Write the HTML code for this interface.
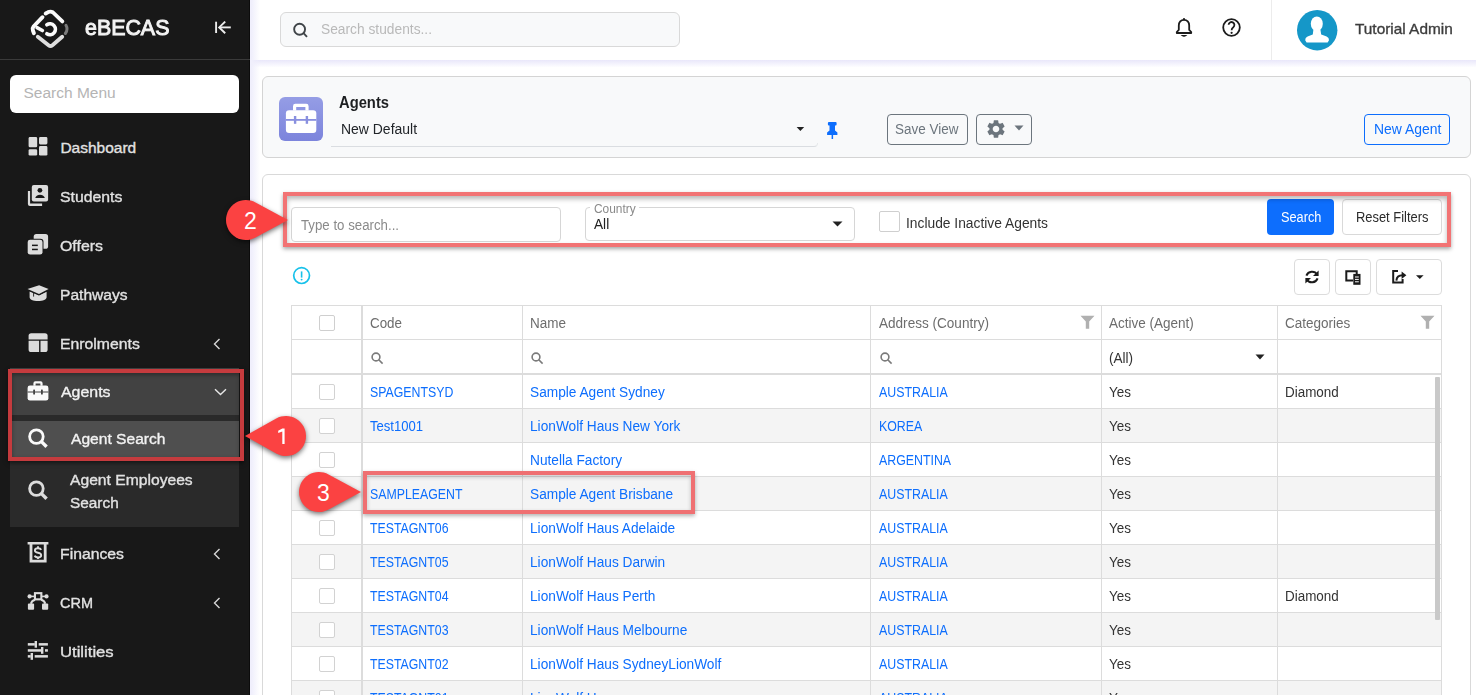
<!DOCTYPE html>
<html><head><meta charset="utf-8"><style>
html,body{margin:0;padding:0;}
body{width:1476px;height:695px;overflow:hidden;position:relative;background:#fff;font-family:"Liberation Sans",sans-serif;}
.t{position:absolute;white-space:nowrap;}
svg{display:block;}
</style></head><body>
<div style="position:absolute;left:250px;top:0px;width:1226px;height:60px;background:#fff;"></div>
<div style="position:absolute;left:250px;top:60px;width:1226px;height:7px;background:linear-gradient(#e9e7fa,#fdfdff);"></div>
<div style="position:absolute;left:250px;top:0px;width:10px;height:695px;background:linear-gradient(90deg,#f0effd,#f0effc 15%,rgba(255,255,255,0));"></div>
<div style="position:absolute;left:0px;top:0px;width:250px;height:695px;background:#181818;"></div>
<div style="position:absolute;left:249px;top:0px;width:1px;height:695px;background:#0c0c0c;"></div>
<div style="position:absolute;left:0px;top:59px;width:250px;height:1px;background:#3a3a3a;"></div>
<svg style="position:absolute;left:28px;top:8px" width="44" height="42" viewBox="0 0 728 695">
<g fill="none" stroke-linecap="round" stroke-width="64">
<path d="M292 92 L335 68 Q372 50 410 70 L568 222" stroke="#fafafa"/>
<path d="M240 152 L92 305 Q68 335 80 368 L98 418" stroke="#fafafa"/>
<path d="M150 325 L238 372" stroke="#fafafa" stroke-width="60"/>
<path d="M162 475 L340 615 Q372 640 404 615 L566 475" stroke="#dedede"/>
<path d="M628 285 Q668 352 618 422" stroke="#7a7a7a" stroke-width="50"/>
<path d="M312 278 A90 90 0 1 1 312 426" stroke="#fafafa" stroke-width="60"/>
</g></svg>
<div class="t" style="left:85.4px;top:17.38px;font-size:22px;line-height:22px;color:#f3f3f3;transform:scaleX(0.9722);transform-origin:0 0;-webkit-text-stroke:1.0px #f3f3f3;">eBECAS</div>
<svg style="position:absolute;left:214px;top:21px" width="18" height="13" viewBox="0 0 18 13"><g stroke="#ececec" stroke-width="1.9" fill="none"><path d="M2.1 0.7V12"/><path d="M16.8 6.4H5.4"/><path d="M11.2 0.6L5.2 6.4L11.2 12.2"/></g></svg>
<div style="position:absolute;left:10px;top:75px;width:229px;height:38px;background:#fff;border-radius:6px;"></div>
<div class="t" style="left:23.5px;top:85.28px;font-size:15.5px;line-height:15.5px;color:#b4b4b4;">Search Menu</div>
<div class="t" style="left:60.4px;top:139.88px;font-size:15.5px;line-height:15.5px;color:#e2e2e2;-webkit-text-stroke:0.35px #e2e2e2;">Dashboard</div>
<div class="t" style="left:60.4px;top:188.88px;font-size:15.5px;line-height:15.5px;color:#e2e2e2;transform:scaleX(1.0199);transform-origin:0 0;-webkit-text-stroke:0.35px #e2e2e2;">Students</div>
<div class="t" style="left:60.4px;top:237.88px;font-size:15.5px;line-height:15.5px;color:#e2e2e2;transform:scaleX(1.0258);transform-origin:0 0;-webkit-text-stroke:0.35px #e2e2e2;">Offers</div>
<div class="t" style="left:60.4px;top:286.88px;font-size:15.5px;line-height:15.5px;color:#e2e2e2;transform:scaleX(1.0060);transform-origin:0 0;-webkit-text-stroke:0.35px #e2e2e2;">Pathways</div>
<div class="t" style="left:60.4px;top:335.88px;font-size:15.5px;line-height:15.5px;color:#e2e2e2;transform:scaleX(1.0180);transform-origin:0 0;-webkit-text-stroke:0.35px #e2e2e2;">Enrolments</div>
<svg style="position:absolute;left:28px;top:137px" width="21" height="20" viewBox="0 0 21 20"><g fill="#dcdcdc"><rect x="0.6" y="0.1" width="8.6" height="10.1" rx="1.3"/><rect x="11" y="0.1" width="8.4" height="7.3" rx="1.3"/><rect x="0.6" y="12.3" width="8.6" height="6.2" rx="1.3"/><rect x="11" y="9.1" width="8.4" height="9.4" rx="1.3"/></g></svg>
<svg style="position:absolute;left:27px;top:184px" width="22" height="23" viewBox="0 0 22 23"><g fill="#dcdcdc"><path d="M0.9 7h2.2v12.5h12v2.4H2.9a2 2 0 0 1-2-2z"/><rect x="4.8" y="1" width="16.3" height="16.6" rx="2"/></g><g fill="#181818"><circle cx="12.9" cy="6.3" r="2.4"/><path d="M8.2 13.9c.9-2.2 2.6-3.2 4.8-3.2s3.9 1 4.9 3.2z"/></g></svg>
<svg style="position:absolute;left:26px;top:232px" width="24" height="24" viewBox="0 0 24 24"><rect x="7.7" y="2.1" width="14.4" height="14.7" rx="2.6" fill="#dcdcdc"/><rect x="0.7" y="6.7" width="16.8" height="16.9" rx="3" fill="#181818"/><rect x="1.7" y="7.7" width="14.8" height="14.9" rx="2.4" fill="#dcdcdc"/><g fill="#181818"><rect x="6" y="12.6" width="5.8" height="1.5"/><rect x="6" y="16.7" width="5.8" height="1.5"/></g></svg>
<svg style="position:absolute;left:26px;top:284px" width="24" height="20" viewBox="0 0 24 20"><g fill="#dcdcdc"><path d="M3.6 7.6L13 11.4L20.6 7.8V13.2C20.6 15.6 17 17 12 17S3.6 15.6 3.6 13.2z"/></g><path d="M2.2 5.9L13 10.8L21.9 6" fill="none" stroke="#181818" stroke-width="1"/><path d="M13.1 1.2L22.6 5L13 9.9L1.5 5z" fill="#dcdcdc"/><path d="M7.6 8.2V12.6" stroke="#181818" stroke-width="0.9"/></svg>
<svg style="position:absolute;left:28px;top:332px" width="21" height="21" viewBox="0 0 21 21"><g fill="#dcdcdc"><path d="M0.6 3.8a2.6 2.6 0 0 1 2.6-2.6h13.8a2.6 2.6 0 0 1 2.6 2.6v3.6H0.6z"/><path d="M0.6 8.8H11.1V20H3.2a2.6 2.6 0 0 1-2.6-2.6z"/><path d="M12.5 8.8H19.6V17.4a2.6 2.6 0 0 1-2.6 2.6H12.5z"/></g></svg>
<svg style="position:absolute;left:212px;top:337.5px" width="10" height="12" viewBox="0 0 10 12"><path d="M7.5 1L2.5 6L7.5 11" stroke="#d6d6d6" stroke-width="1.4" fill="none"/></svg>
<div style="position:absolute;left:10px;top:368px;width:229px;height:47px;background:#424242;"></div>
<div style="position:absolute;left:10px;top:415px;width:229px;height:112px;background:#2a2a2a;"></div>
<div style="position:absolute;left:12px;top:421px;width:227px;height:36px;background:#4f4f4f;"></div>
<div class="t" style="left:60.5px;top:384.28px;font-size:15.5px;line-height:15.5px;color:#f2f2f2;transform:scaleX(1.0258);transform-origin:0 0;-webkit-text-stroke:0.35px #f2f2f2;">Agents</div>
<svg style="position:absolute;left:214px;top:388px" width="13" height="8" viewBox="0 0 13 8"><path d="M1 1.2L6.5 6.6L12 1.2" stroke="#e6e6e6" stroke-width="1.4" fill="none"/></svg>
<svg style="position:absolute;left:27px;top:381px" width="22" height="21" viewBox="0 0 22 21"><g fill="#fafafa"><path d="M6.4 4.8V2.2a2 2 0 0 1 2-2h5.2a2 2 0 0 1 2 2v2.6h-2.2V2.4h-4.8v2.4z"/><rect x="0.6" y="4.5" width="20.8" height="15.1" rx="2.4"/></g><g fill="#424242"><rect x="0.6" y="10.5" width="20.8" height="1"/><rect x="6.2" y="8.4" width="1.8" height="5.1" rx=".6"/><rect x="14" y="8.4" width="1.8" height="5.1" rx=".6"/></g></svg>
<div class="t" style="left:70.6px;top:431.28px;font-size:15.5px;line-height:15.5px;color:#f2f2f2;transform:scaleX(1.0061);transform-origin:0 0;-webkit-text-stroke:0.35px #f2f2f2;">Agent Search</div>
<svg style="position:absolute;left:24px;top:424px" width="26" height="26" viewBox="0 0 26 26"><g fill="none" stroke="#fafafa"><circle cx="12.4" cy="12.6" r="6.8" stroke-width="2.8"/><path d="M17.4 17.6L22.6 22.8" stroke-width="3.4"/></g></svg>
<div class="t" style="left:70.3px;top:472.48px;font-size:15.5px;line-height:15.5px;color:#e2e2e2;transform:scaleX(1.0100);transform-origin:0 0;-webkit-text-stroke:0.35px #e2e2e2;">Agent Employees</div>
<div class="t" style="left:70.3px;top:495.48px;font-size:15.5px;line-height:15.5px;color:#e2e2e2;transform:scaleX(0.9916);transform-origin:0 0;-webkit-text-stroke:0.35px #e2e2e2;">Search</div>
<svg style="position:absolute;left:24px;top:476px" width="26" height="26" viewBox="0 0 26 26"><g fill="none" stroke="#dcdcdc"><circle cx="12.4" cy="12.6" r="6.8" stroke-width="2.8"/><path d="M17.4 17.6L22.6 22.8" stroke-width="3.4"/></g></svg>
<div class="t" style="left:60.4px;top:545.58px;font-size:15.5px;line-height:15.5px;color:#e2e2e2;transform:scaleX(1.0176);transform-origin:0 0;-webkit-text-stroke:0.35px #e2e2e2;">Finances</div>
<div class="t" style="left:60.4px;top:594.58px;font-size:15.5px;line-height:15.5px;color:#e2e2e2;transform:scaleX(0.9349);transform-origin:0 0;-webkit-text-stroke:0.35px #e2e2e2;">CRM</div>
<div class="t" style="left:60.4px;top:643.58px;font-size:15.5px;line-height:15.5px;color:#e2e2e2;transform:scaleX(1.0750);transform-origin:0 0;-webkit-text-stroke:0.35px #e2e2e2;">Utilities</div>
<svg style="position:absolute;left:212px;top:547.5px" width="10" height="12" viewBox="0 0 10 12"><path d="M7.5 1L2.5 6L7.5 11" stroke="#d6d6d6" stroke-width="1.4" fill="none"/></svg>
<svg style="position:absolute;left:212px;top:596.5px" width="10" height="12" viewBox="0 0 10 12"><path d="M7.5 1L2.5 6L7.5 11" stroke="#d6d6d6" stroke-width="1.4" fill="none"/></svg>
<svg style="position:absolute;left:27px;top:540px" width="22" height="24" viewBox="0 0 22 24"><g fill="none" stroke="#dcdcdc"><path d="M0.6 3.25H21.4" stroke-width="2.5"/><path d="M4 3.5V21.2H18.2V3.5" stroke-width="2.8"/></g><g fill="none" stroke="#dcdcdc" stroke-width="1.9"><path d="M14.2 9.8C13.8 8.8 12.6 8.2 11 8.2C9.2 8.2 7.9 9.1 7.9 10.5C7.9 12 9.4 12.5 11 12.8C12.7 13.1 14.2 13.7 14.2 15.2C14.2 16.6 12.8 17.4 11 17.4C9.3 17.4 8.1 16.8 7.7 15.6"/><path d="M11 6.3V8.4"/><path d="M11 17.2V19"/></g></svg>
<svg style="position:absolute;left:26px;top:590px" width="24" height="22" viewBox="0 0 24 22"><g fill="#dcdcdc"><circle cx="3.6" cy="6.4" r="2.1"/><circle cx="20.5" cy="6.4" r="2.1"/><rect x="1.9" y="13.5" width="6.2" height="6.2" rx="1"/><rect x="16" y="13.5" width="6.2" height="6.2" rx="1"/></g><g fill="none" stroke="#dcdcdc"><path d="M3.6 6.4H20.5" stroke-width="1.6"/><path d="M9 9.8C6.6 10.6 5.3 12 4.9 13.8" stroke-width="2"/><path d="M15.2 9.8C17.6 10.6 18.9 12 19.3 13.8" stroke-width="2"/><rect x="8.95" y="3.15" width="6.4" height="6.2" fill="#181818" stroke-width="2.1"/></g></svg>
<svg style="position:absolute;left:26px;top:640px" width="24" height="22" viewBox="0 0 24 22"><g fill="#dcdcdc"><rect x="1.8" y="3.1" width="7" height="2.5"/><rect x="8.6" y="1" width="2.4" height="6.7"/><rect x="12.7" y="3.1" width="9.2" height="2.5"/><rect x="1.8" y="9.2" width="13.3" height="2.5"/><rect x="15" y="7" width="2.4" height="6.8"/><rect x="19" y="9.2" width="2.9" height="2.5"/><rect x="1.8" y="15.1" width="2.9" height="2.5"/><rect x="4.6" y="13" width="2.4" height="6.8"/><rect x="8.7" y="15.1" width="13.2" height="2.5"/></g></svg>
<div style="position:absolute;left:8px;top:369px;width:236px;height:92px;box-sizing:border-box;border:4px solid #c53b3e;box-shadow:0 2px 4px rgba(0,0,0,.5), inset 0 2px 4px rgba(0,0,0,.35);"></div>
<div style="position:absolute;left:280px;top:12px;width:400px;height:35px;box-sizing:border-box;background:#f8f9fa;border:1px solid #d9d9d9;border-radius:6px;"></div>
<svg style="position:absolute;left:291px;top:21px" width="18" height="18" viewBox="0 0 18 18"><g fill="none" stroke="#3f4448" stroke-width="1.9"><circle cx="8.6" cy="8.25" r="5.45"/><path d="M12.5 12.2L16 15.8"/></g></svg>
<div class="t" style="left:321.4px;top:21.95px;font-size:14px;line-height:14px;color:#b9b9b9;transform:scaleX(0.9837);transform-origin:0 0;">Search students...</div>
<svg style="position:absolute;left:1173px;top:16px" width="22" height="23" viewBox="0 0 22 23"><g fill="none" stroke="#1c1c1c" stroke-width="1.8" stroke-linejoin="round"><path d="M11 3.8C7.9 3.8 5.8 6.2 5.8 9.4V13.8L3.8 16V17H18.2V16L16.2 13.8V9.4C16.2 6.2 14.1 3.8 11 3.8z"/></g><circle cx="11" cy="3.2" r="1.1" fill="#1c1c1c"/><path d="M9.2 19.6Q11 21 12.8 19.6z" fill="#1c1c1c" stroke="#1c1c1c" stroke-width="1.1"/></svg>
<svg style="position:absolute;left:1221px;top:17px" width="22" height="22" viewBox="0 0 22 22"><circle cx="10.5" cy="10.5" r="8.3" fill="none" stroke="#1c1c1c" stroke-width="1.8"/><path d="M7.6 7.8A2.9 2.9 0 1 1 12.3 10.2C11.2 11 10.6 11.6 10.6 13.2" fill="none" stroke="#1c1c1c" stroke-width="1.8"/><circle cx="10.6" cy="15.8" r="1.1" fill="#1c1c1c"/></svg>
<div style="position:absolute;left:1271px;top:0px;width:1px;height:60px;background:#ececec;"></div>
<svg style="position:absolute;left:1297px;top:10px" width="41" height="41" viewBox="0 0 41 41"><circle cx="20.2" cy="20.2" r="20.2" fill="#1597c8"/><g fill="#fff"><ellipse cx="19.8" cy="13.8" rx="6" ry="7.4"/><path d="M16.4 19.4L15.8 24.6Q14.4 25.4 10.6 26.4Q8 27.6 8.2 30.2L9.6 32.6H30.6L32 30.2Q32.2 27.6 29.6 26.4Q25.8 25.4 24.2 24.6L23.4 19.4z"/></g></svg>
<div class="t" style="left:1354.9px;top:21.00px;font-size:15px;line-height:15px;color:#3d3d3d;transform:scaleX(1.0250);transform-origin:0 0;-webkit-text-stroke:0.35px #3d3d3d;">Tutorial Admin</div>
<div style="position:absolute;left:262px;top:76px;width:1209px;height:82px;box-sizing:border-box;background:#f8f9fa;border:1px solid #d4d4d4;border-radius:6px;"></div>
<div style="position:absolute;left:279px;top:97px;width:44px;height:44px;background:linear-gradient(#959de5,#7c84dc);border-radius:6px;"></div>
<svg style="position:absolute;left:279px;top:97px" width="44" height="44" viewBox="0 0 44 44"><g fill="#fff"><path d="M14 13.4V9.2a2.4 2.4 0 0 1 2.4-2.4h10.8a2.4 2.4 0 0 1 2.4 2.4v4.2h-3.2v-3.4h-9.2v3.4z"/><rect x="6.9" y="13.2" width="30.4" height="22.8" rx="3.2"/></g><g fill="#8990df"><rect x="6.9" y="22" width="30.4" height="1.8"/><rect x="14.9" y="19" width="2.4" height="7.8"/><rect x="26.7" y="19" width="2.4" height="7.8"/></g></svg>
<div class="t" style="left:339.3px;top:94.66px;font-size:16px;line-height:16px;color:#1d1f21;transform:scaleX(0.9221);transform-origin:0 0;font-weight:bold;">Agents</div>
<div class="t" style="left:340.6px;top:122.15px;font-size:14px;line-height:14px;color:#212529;transform:scaleX(0.9967);transform-origin:0 0;">New Default</div>
<div style="position:absolute;left:331px;top:143px;width:487px;height:4px;box-sizing:border-box;border-bottom:1px solid #dadde1;border-right:1px solid #e6e8ea;border-bottom-right-radius:4px;"></div>
<svg style="position:absolute;left:796px;top:126px" width="9" height="6" viewBox="0 0 9 6"><path d="M0.6 1H8.2L4.4 4.9z" fill="#222"/></svg>
<svg style="position:absolute;left:824px;top:120px" width="16" height="20" viewBox="0 0 16 20"><path d="M5 1.9H11.6A1.1 1.1 0 0 1 12.6 3V4.6A1 1 0 0 1 11.6 5.6H11V10.6L13.4 12.4V14.9H9.1V19H7.6V14.9H3.1V12.4L5.5 10.6V5.6H4.9A1 1 0 0 1 3.9 4.6V3A1.1 1.1 0 0 1 5 1.9z" fill="#0d6efd"/></svg>
<div style="position:absolute;left:887px;top:114px;width:81px;height:31px;box-sizing:border-box;border:1px solid #6c757d;border-radius:4px;"></div>
<div class="t" style="left:895.4px;top:122.15px;font-size:14px;line-height:14px;color:#6c757d;transform:scaleX(0.9622);transform-origin:0 0;">Save View</div>
<div style="position:absolute;left:976px;top:114px;width:56px;height:31px;box-sizing:border-box;border:1px solid #6c757d;border-radius:4px;"></div>
<svg style="position:absolute;left:985px;top:118px" width="22" height="22" viewBox="0 0 24 24"><path fill="#6c757d" d="M19.14 12.94c.04-.3.06-.61.06-.94 0-.32-.02-.64-.07-.94l2.03-1.58a.49.49 0 0 0 .12-.61l-1.92-3.32a.488.488 0 0 0-.59-.22l-2.39.96c-.5-.38-1.03-.7-1.62-.94l-.36-2.54a.484.484 0 0 0-.48-.41h-3.84c-.24 0-.43.17-.47.41l-.36 2.54c-.59.24-1.13.57-1.62.94l-2.39-.96c-.22-.08-.47 0-.59.22L2.74 8.87c-.12.21-.08.47.12.61l2.03 1.58c-.05.3-.09.63-.09.94s.02.64.07.94l-2.03 1.58a.49.49 0 0 0-.12.61l1.92 3.32c.12.22.37.29.59.22l2.39-.96c.5.38 1.03.7 1.62.94l.36 2.54c.05.24.24.41.48.41h3.84c.24 0 .44-.17.47-.41l.36-2.54c.59-.24 1.13-.56 1.62-.94l2.39.96c.22.08.47 0 .59-.22l1.92-3.32c.12-.22.07-.47-.12-.61l-2.01-1.58zM12 15.6c-1.98 0-3.6-1.62-3.6-3.6s1.62-3.6 3.6-3.6 3.6 1.62 3.6 3.6-1.62 3.6-3.6 3.6z"/></svg>
<svg style="position:absolute;left:1014px;top:125px" width="10" height="6" viewBox="0 0 10 6"><path d="M0.5 0.5H9.5L5 5.5z" fill="#6c757d"/></svg>
<div style="position:absolute;left:1364px;top:114px;width:86px;height:31px;box-sizing:border-box;border:1px solid #0d6efd;border-radius:4px;"></div>
<div class="t" style="left:1373.6px;top:122.25px;font-size:14px;line-height:14px;color:#0d6efd;transform:scaleX(0.9954);transform-origin:0 0;">New Agent</div>
<div style="position:absolute;left:262px;top:174px;width:1209px;height:600px;box-sizing:border-box;background:#fff;border:1px solid #d9d9d9;border-radius:6px;"></div>
<div style="position:absolute;left:291px;top:207px;width:270px;height:35px;box-sizing:border-box;border:1px solid #d6d6d6;border-radius:4px;"></div>
<div class="t" style="left:301px;top:218.15px;font-size:14px;line-height:14px;color:#8a8a8a;transform:scaleX(0.9469);transform-origin:0 0;">Type to search...</div>
<div style="position:absolute;left:585px;top:207px;width:270px;height:34px;box-sizing:border-box;border:1px solid #d6d6d6;border-radius:4px;"></div>
<div style="position:absolute;left:590px;top:205px;width:49px;height:4px;background:#fff;"></div>
<div class="t" style="left:593.9px;top:202.74px;font-size:12px;line-height:12px;color:#8a8a8a;transform:scaleX(0.9925);transform-origin:0 0;">Country</div>
<div class="t" style="left:593.9px;top:216.95px;font-size:14px;line-height:14px;color:#212121;transform:scaleX(0.9769);transform-origin:0 0;">All</div>
<svg style="position:absolute;left:832px;top:221px" width="11" height="6" viewBox="0 0 11 6"><path d="M0.5 0.5H10.5L5.5 5.5z" fill="#222"/></svg>
<div style="position:absolute;left:879px;top:211px;width:21px;height:21px;box-sizing:border-box;border:1px solid #cfcfcf;border-radius:2px;"></div>
<div class="t" style="left:906.3px;top:216.25px;font-size:14px;line-height:14px;color:#333;transform:scaleX(0.9862);transform-origin:0 0;">Include Inactive Agents</div>
<div style="position:absolute;left:1267px;top:199px;width:67px;height:36px;background:#0d6efd;border-radius:4px;"></div>
<div class="t" style="left:1280.9px;top:210.05px;font-size:14px;line-height:14px;color:#fff;transform:scaleX(0.9108);transform-origin:0 0;">Search</div>
<div style="position:absolute;left:1342px;top:199px;width:100px;height:36px;box-sizing:border-box;border:1px solid #d9d9d9;border-radius:4px;"></div>
<div class="t" style="left:1356.4px;top:210.05px;font-size:14px;line-height:14px;color:#2b2b2b;transform:scaleX(0.9214);transform-origin:0 0;">Reset Filters</div>
<div style="position:absolute;left:283px;top:192px;width:1168px;height:55px;box-sizing:border-box;border:4px solid #f27374;box-shadow:0 2px 4px rgba(0,0,0,.35), inset 0 3px 5px rgba(0,0,0,.28);"></div>
<svg style="position:absolute;left:292px;top:266px" width="19" height="19" viewBox="0 0 19 19"><circle cx="9.6" cy="9.6" r="7.9" fill="none" stroke="#17c1ea" stroke-width="1.7"/><path d="M9.6 5.4V11.6" stroke="#17c1ea" stroke-width="1.6"/><circle cx="9.6" cy="13.6" r=".95" fill="#17c1ea"/></svg>
<div style="position:absolute;left:1294px;top:259px;width:36px;height:36px;box-sizing:border-box;border:1px solid #dcdcdc;border-radius:4px;"></div>
<div style="position:absolute;left:1335px;top:259px;width:36px;height:36px;box-sizing:border-box;border:1px solid #dcdcdc;border-radius:4px;"></div>
<div style="position:absolute;left:1376px;top:259px;width:66px;height:36px;box-sizing:border-box;border:1px solid #dcdcdc;border-radius:4px;"></div>
<svg style="position:absolute;left:1303px;top:268px" width="18" height="18" viewBox="0 0 18 18"><g fill="none" stroke="#1b1b1b" stroke-width="2"><path d="M14.2 6.6A6 6 0 0 0 3.4 7.6"/><path d="M3.8 11.4A6 6 0 0 0 14.6 10.4"/></g><path d="M15.6 2.4V8H10z" fill="#1b1b1b"/><path d="M2.4 15.6V10H8z" fill="#1b1b1b"/></svg>
<svg style="position:absolute;left:1344px;top:268px" width="18" height="18" viewBox="0 0 18 18"><g fill="none" stroke="#1b1b1b" stroke-width="2"><path d="M12.7 6V3.3H2.3V12.5H9"/></g><rect x="9.3" y="5.9" width="7.2" height="10.9" fill="#1b1b1b"/><g stroke="#fff" stroke-width="1"><path d="M11 9H14.8"/><path d="M11 11.4H14.8"/><path d="M11 13.8H14.8"/></g></svg>
<svg style="position:absolute;left:1389px;top:268px" width="20" height="18" viewBox="0 0 20 18"><g fill="none" stroke="#1b1b1b" stroke-width="2"><path d="M9 3H4.2V14.6H13.6V11"/><path d="M7.4 12.6C7.6 9 10 7.2 13.6 7.2"/></g><path d="M12.6 3.4L17.4 7.2L12.6 11z" fill="#1b1b1b"/></svg>
<svg style="position:absolute;left:1414px;top:273px" width="12" height="8" viewBox="0 0 12 8"><path d="M2 2.3H9.6L5.8 6z" fill="#1b1b1b"/></svg>
<div style="position:absolute;left:291px;top:305px;width:1151px;height:400px;background:#fff;"></div>
<div style="position:absolute;left:291px;top:409px;width:1151px;height:33px;background:#f4f4f4;"></div>
<div style="position:absolute;left:291px;top:477px;width:1151px;height:33px;background:#f4f4f4;"></div>
<div style="position:absolute;left:291px;top:545px;width:1151px;height:33px;background:#f4f4f4;"></div>
<div style="position:absolute;left:291px;top:613px;width:1151px;height:33px;background:#f4f4f4;"></div>
<div style="position:absolute;left:291px;top:681px;width:1151px;height:33px;background:#f4f4f4;"></div>
<div style="position:absolute;left:291px;top:305px;width:1151px;height:1px;background:#dcdcdc;"></div>
<div style="position:absolute;left:291px;top:339px;width:1151px;height:1px;background:#dcdcdc;"></div>
<div style="position:absolute;left:291px;top:373px;width:1151px;height:2px;background:#dcdcdc;"></div>
<div style="position:absolute;left:291px;top:408px;width:1151px;height:1px;background:#dcdcdc;"></div>
<div style="position:absolute;left:291px;top:442px;width:1151px;height:1px;background:#dcdcdc;"></div>
<div style="position:absolute;left:291px;top:476px;width:1151px;height:1px;background:#dcdcdc;"></div>
<div style="position:absolute;left:291px;top:510px;width:1151px;height:1px;background:#dcdcdc;"></div>
<div style="position:absolute;left:291px;top:544px;width:1151px;height:1px;background:#dcdcdc;"></div>
<div style="position:absolute;left:291px;top:578px;width:1151px;height:1px;background:#dcdcdc;"></div>
<div style="position:absolute;left:291px;top:612px;width:1151px;height:1px;background:#dcdcdc;"></div>
<div style="position:absolute;left:291px;top:646px;width:1151px;height:1px;background:#dcdcdc;"></div>
<div style="position:absolute;left:291px;top:680px;width:1151px;height:1px;background:#dcdcdc;"></div>
<div style="position:absolute;left:291px;top:305px;width:1px;height:400px;background:#dcdcdc;"></div>
<div style="position:absolute;left:361px;top:305px;width:2px;height:400px;background:#dcdcdc;"></div>
<div style="position:absolute;left:522px;top:305px;width:1px;height:400px;background:#dcdcdc;"></div>
<div style="position:absolute;left:870px;top:305px;width:1px;height:400px;background:#dcdcdc;"></div>
<div style="position:absolute;left:1101px;top:305px;width:1px;height:400px;background:#dcdcdc;"></div>
<div style="position:absolute;left:1277px;top:305px;width:1px;height:400px;background:#dcdcdc;"></div>
<div style="position:absolute;left:1441px;top:305px;width:1px;height:400px;background:#dcdcdc;"></div>
<div style="position:absolute;left:319px;top:315px;width:16px;height:16px;box-sizing:border-box;border:1px solid #cfcfcf;border-radius:2px;background:#fff;"></div>
<div class="t" style="left:369.7px;top:316.15px;font-size:14px;line-height:14px;color:#6d6d6d;transform:scaleX(0.9561);transform-origin:0 0;">Code</div>
<div class="t" style="left:530px;top:316.15px;font-size:14px;line-height:14px;color:#6d6d6d;transform:scaleX(0.9640);transform-origin:0 0;">Name</div>
<div class="t" style="left:879px;top:316.15px;font-size:14px;line-height:14px;color:#6d6d6d;transform:scaleX(0.9684);transform-origin:0 0;">Address (Country)</div>
<div class="t" style="left:1109.4px;top:316.15px;font-size:14px;line-height:14px;color:#6d6d6d;transform:scaleX(0.9650);transform-origin:0 0;">Active (Agent)</div>
<div class="t" style="left:1285.4px;top:316.15px;font-size:14px;line-height:14px;color:#6d6d6d;transform:scaleX(0.9650);transform-origin:0 0;">Categories</div>
<svg style="position:absolute;left:1080px;top:315px" width="15" height="15" viewBox="0 0 15 15"><path d="M0.5 0.8H14.5L9.2 6.6V13.8H5.8V6.6z" fill="#b0b0b0"/></svg>
<svg style="position:absolute;left:1420px;top:315px" width="15" height="15" viewBox="0 0 15 15"><path d="M0.5 0.8H14.5L9.2 6.6V13.8H5.8V6.6z" fill="#b0b0b0"/></svg>
<svg style="position:absolute;left:370.5px;top:352px" width="13" height="13" viewBox="0 0 13 13"><g fill="none" stroke="#7a7a7a" stroke-width="1.6"><circle cx="5" cy="5" r="3.9"/><path d="M7.8 7.8L11.6 11.6"/></g></svg>
<svg style="position:absolute;left:530.5px;top:352px" width="13" height="13" viewBox="0 0 13 13"><g fill="none" stroke="#7a7a7a" stroke-width="1.6"><circle cx="5" cy="5" r="3.9"/><path d="M7.8 7.8L11.6 11.6"/></g></svg>
<svg style="position:absolute;left:879.5px;top:352px" width="13" height="13" viewBox="0 0 13 13"><g fill="none" stroke="#7a7a7a" stroke-width="1.6"><circle cx="5" cy="5" r="3.9"/><path d="M7.8 7.8L11.6 11.6"/></g></svg>
<div class="t" style="left:1109.4px;top:350.75px;font-size:14px;line-height:14px;color:#333;transform:scaleX(0.9700);transform-origin:0 0;">(All)</div>
<svg style="position:absolute;left:1255px;top:354px" width="10" height="6" viewBox="0 0 10 6"><path d="M0.5 0.5H9.5L5 5.5z" fill="#222"/></svg>
<div style="position:absolute;left:319px;top:384px;width:16px;height:16px;box-sizing:border-box;border:1px solid #d2d2d2;border-radius:2px;background:#fff;"></div>
<div class="t" style="left:369.7px;top:385.05px;font-size:14px;line-height:14px;color:#0d6efd;transform:scaleX(0.8800);transform-origin:0 0;">SPAGENTSYD</div>
<div class="t" style="left:529.9px;top:385.05px;font-size:14px;line-height:14px;color:#0d6efd;transform:scaleX(0.9780);transform-origin:0 0;">Sample Agent Sydney</div>
<div class="t" style="left:879px;top:385.05px;font-size:14px;line-height:14px;color:#0d6efd;transform:scaleX(0.8830);transform-origin:0 0;">AUSTRALIA</div>
<div class="t" style="left:1109.4px;top:385.05px;font-size:14px;line-height:14px;color:#333;transform:scaleX(0.9600);transform-origin:0 0;">Yes</div>
<div class="t" style="left:1285.4px;top:385.05px;font-size:14px;line-height:14px;color:#333;transform:scaleX(0.9600);transform-origin:0 0;">Diamond</div>
<div style="position:absolute;left:319px;top:418px;width:16px;height:16px;box-sizing:border-box;border:1px solid #d2d2d2;border-radius:2px;background:#fff;"></div>
<div class="t" style="left:369.7px;top:419.05px;font-size:14px;line-height:14px;color:#0d6efd;transform:scaleX(0.9350);transform-origin:0 0;">Test1001</div>
<div class="t" style="left:529.9px;top:419.05px;font-size:14px;line-height:14px;color:#0d6efd;transform:scaleX(0.9780);transform-origin:0 0;">LionWolf Haus New York</div>
<div class="t" style="left:879px;top:419.05px;font-size:14px;line-height:14px;color:#0d6efd;transform:scaleX(0.8830);transform-origin:0 0;">KOREA</div>
<div class="t" style="left:1109.4px;top:419.05px;font-size:14px;line-height:14px;color:#333;transform:scaleX(0.9600);transform-origin:0 0;">Yes</div>
<div style="position:absolute;left:319px;top:452px;width:16px;height:16px;box-sizing:border-box;border:1px solid #d2d2d2;border-radius:2px;background:#fff;"></div>
<div class="t" style="left:529.9px;top:453.05px;font-size:14px;line-height:14px;color:#0d6efd;transform:scaleX(0.9780);transform-origin:0 0;">Nutella Factory</div>
<div class="t" style="left:879px;top:453.05px;font-size:14px;line-height:14px;color:#0d6efd;transform:scaleX(0.8830);transform-origin:0 0;">ARGENTINA</div>
<div class="t" style="left:1109.4px;top:453.05px;font-size:14px;line-height:14px;color:#333;transform:scaleX(0.9600);transform-origin:0 0;">Yes</div>
<div style="position:absolute;left:319px;top:486px;width:16px;height:16px;box-sizing:border-box;border:1px solid #d2d2d2;border-radius:2px;background:#fff;"></div>
<div class="t" style="left:369.7px;top:487.05px;font-size:14px;line-height:14px;color:#0d6efd;transform:scaleX(0.8800);transform-origin:0 0;">SAMPLEAGENT</div>
<div class="t" style="left:529.9px;top:487.05px;font-size:14px;line-height:14px;color:#0d6efd;transform:scaleX(0.9780);transform-origin:0 0;">Sample Agent Brisbane</div>
<div class="t" style="left:879px;top:487.05px;font-size:14px;line-height:14px;color:#0d6efd;transform:scaleX(0.8830);transform-origin:0 0;">AUSTRALIA</div>
<div class="t" style="left:1109.4px;top:487.05px;font-size:14px;line-height:14px;color:#333;transform:scaleX(0.9600);transform-origin:0 0;">Yes</div>
<div style="position:absolute;left:319px;top:520px;width:16px;height:16px;box-sizing:border-box;border:1px solid #d2d2d2;border-radius:2px;background:#fff;"></div>
<div class="t" style="left:369.7px;top:521.05px;font-size:14px;line-height:14px;color:#0d6efd;transform:scaleX(0.8800);transform-origin:0 0;">TESTAGNT06</div>
<div class="t" style="left:529.9px;top:521.05px;font-size:14px;line-height:14px;color:#0d6efd;transform:scaleX(0.9780);transform-origin:0 0;">LionWolf Haus Adelaide</div>
<div class="t" style="left:879px;top:521.05px;font-size:14px;line-height:14px;color:#0d6efd;transform:scaleX(0.8830);transform-origin:0 0;">AUSTRALIA</div>
<div class="t" style="left:1109.4px;top:521.05px;font-size:14px;line-height:14px;color:#333;transform:scaleX(0.9600);transform-origin:0 0;">Yes</div>
<div style="position:absolute;left:319px;top:554px;width:16px;height:16px;box-sizing:border-box;border:1px solid #d2d2d2;border-radius:2px;background:#fff;"></div>
<div class="t" style="left:369.7px;top:555.05px;font-size:14px;line-height:14px;color:#0d6efd;transform:scaleX(0.8800);transform-origin:0 0;">TESTAGNT05</div>
<div class="t" style="left:529.9px;top:555.05px;font-size:14px;line-height:14px;color:#0d6efd;transform:scaleX(0.9780);transform-origin:0 0;">LionWolf Haus Darwin</div>
<div class="t" style="left:879px;top:555.05px;font-size:14px;line-height:14px;color:#0d6efd;transform:scaleX(0.8830);transform-origin:0 0;">AUSTRALIA</div>
<div class="t" style="left:1109.4px;top:555.05px;font-size:14px;line-height:14px;color:#333;transform:scaleX(0.9600);transform-origin:0 0;">Yes</div>
<div style="position:absolute;left:319px;top:588px;width:16px;height:16px;box-sizing:border-box;border:1px solid #d2d2d2;border-radius:2px;background:#fff;"></div>
<div class="t" style="left:369.7px;top:589.05px;font-size:14px;line-height:14px;color:#0d6efd;transform:scaleX(0.8800);transform-origin:0 0;">TESTAGNT04</div>
<div class="t" style="left:529.9px;top:589.05px;font-size:14px;line-height:14px;color:#0d6efd;transform:scaleX(0.9780);transform-origin:0 0;">LionWolf Haus Perth</div>
<div class="t" style="left:879px;top:589.05px;font-size:14px;line-height:14px;color:#0d6efd;transform:scaleX(0.8830);transform-origin:0 0;">AUSTRALIA</div>
<div class="t" style="left:1109.4px;top:589.05px;font-size:14px;line-height:14px;color:#333;transform:scaleX(0.9600);transform-origin:0 0;">Yes</div>
<div class="t" style="left:1285.4px;top:589.05px;font-size:14px;line-height:14px;color:#333;transform:scaleX(0.9600);transform-origin:0 0;">Diamond</div>
<div style="position:absolute;left:319px;top:622px;width:16px;height:16px;box-sizing:border-box;border:1px solid #d2d2d2;border-radius:2px;background:#fff;"></div>
<div class="t" style="left:369.7px;top:623.05px;font-size:14px;line-height:14px;color:#0d6efd;transform:scaleX(0.8800);transform-origin:0 0;">TESTAGNT03</div>
<div class="t" style="left:529.9px;top:623.05px;font-size:14px;line-height:14px;color:#0d6efd;transform:scaleX(0.9780);transform-origin:0 0;">LionWolf Haus Melbourne</div>
<div class="t" style="left:879px;top:623.05px;font-size:14px;line-height:14px;color:#0d6efd;transform:scaleX(0.8830);transform-origin:0 0;">AUSTRALIA</div>
<div class="t" style="left:1109.4px;top:623.05px;font-size:14px;line-height:14px;color:#333;transform:scaleX(0.9600);transform-origin:0 0;">Yes</div>
<div style="position:absolute;left:319px;top:656px;width:16px;height:16px;box-sizing:border-box;border:1px solid #d2d2d2;border-radius:2px;background:#fff;"></div>
<div class="t" style="left:369.7px;top:657.05px;font-size:14px;line-height:14px;color:#0d6efd;transform:scaleX(0.8800);transform-origin:0 0;">TESTAGNT02</div>
<div class="t" style="left:529.9px;top:657.05px;font-size:14px;line-height:14px;color:#0d6efd;transform:scaleX(0.9780);transform-origin:0 0;">LionWolf Haus SydneyLionWolf</div>
<div class="t" style="left:879px;top:657.05px;font-size:14px;line-height:14px;color:#0d6efd;transform:scaleX(0.8830);transform-origin:0 0;">AUSTRALIA</div>
<div class="t" style="left:1109.4px;top:657.05px;font-size:14px;line-height:14px;color:#333;transform:scaleX(0.9600);transform-origin:0 0;">Yes</div>
<div style="position:absolute;left:319px;top:690px;width:16px;height:16px;box-sizing:border-box;border:1px solid #d2d2d2;border-radius:2px;background:#fff;"></div>
<div class="t" style="left:369.7px;top:691.05px;font-size:14px;line-height:14px;color:#0d6efd;transform:scaleX(0.8800);transform-origin:0 0;">TESTAGNT01</div>
<div class="t" style="left:529.9px;top:691.05px;font-size:14px;line-height:14px;color:#0d6efd;transform:scaleX(0.9780);transform-origin:0 0;">LionWolf Haus</div>
<div class="t" style="left:879px;top:691.05px;font-size:14px;line-height:14px;color:#0d6efd;transform:scaleX(0.8830);transform-origin:0 0;">AUSTRALIA</div>
<div class="t" style="left:1109.4px;top:691.05px;font-size:14px;line-height:14px;color:#333;transform:scaleX(0.9600);transform-origin:0 0;">Yes</div>
<div style="position:absolute;left:1435px;top:377px;width:5px;height:243px;background:#c9c9c9;border-radius:1px;"></div>
<div style="position:absolute;left:363px;top:471px;width:332px;height:43px;box-sizing:border-box;border:4px solid #ef7072;box-shadow:0 2px 4px rgba(0,0,0,.3), inset 0 2px 4px rgba(0,0,0,.22);"></div>
<svg style="position:absolute;left:218.0px;top:192.0px;overflow:visible" width="78" height="58"><path d="M70.00 28.00 L37.52 45.59 A20.0 20.0 0 1 1 37.52 10.41 Z" fill="#fb4242" style="filter:drop-shadow(0 2px 2.5px rgba(0,0,0,.55))"/></svg>
<div class="t" style="left:244px;top:209.73px;font-size:23px;line-height:23px;color:#fff;">2</div>
<svg style="position:absolute;left:237px;top:408.0px;overflow:visible" width="77" height="58"><path d="M8.00 28.00 L39.24 45.46 A20.0 20.0 0 1 0 39.24 10.54 Z" fill="#fb4242" style="filter:drop-shadow(0 2px 2.5px rgba(0,0,0,.55))"/></svg>
<svg style="position:absolute;left:275px;top:426px" width="14" height="20"><path d="M7.3 2.6H9.6V18.1H7.3V5.4L3.2 6.9V4.8z" fill="#fff"/></svg>
<svg style="position:absolute;left:291.0px;top:464.0px;overflow:visible" width="78" height="58"><path d="M70.00 28.00 L37.52 45.59 A20.0 20.0 0 1 1 37.52 10.41 Z" fill="#fb4242" style="filter:drop-shadow(0 2px 2.5px rgba(0,0,0,.55))"/></svg>
<div class="t" style="left:317px;top:481.53px;font-size:23px;line-height:23px;color:#fff;">3</div>
</body></html>
